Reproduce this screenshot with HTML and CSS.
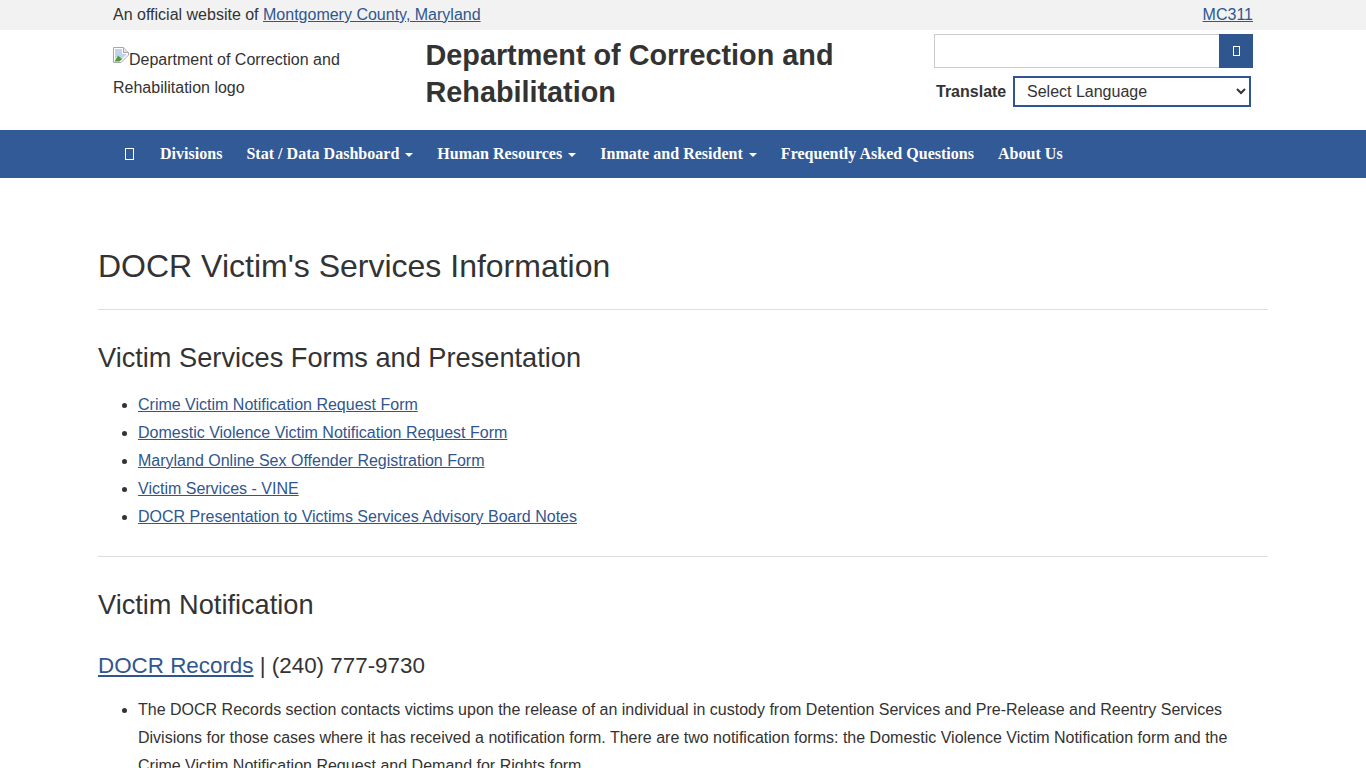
FILE: index.html
```html
<!DOCTYPE html>
<html lang="en">
<head>
<meta charset="utf-8">
<title>DOCR Victim's Services Information</title>
<link rel="stylesheet" href="styles.css">
</head>
<body>
<div class="topbar">
  <div class="wrap topbar-row">
    <div>An official website of <a href="#">Montgomery County, Maryland</a></div>
    <a href="#">MC311</a>
  </div>
</div>
<header class="wrap header">
  <div class="logo">
    <svg class="broken" width="16" height="16" viewBox="0 0 16 16" aria-hidden="true"><path d="M0.5 0.5H10.5L15.5 5.5V8L8 15.5H0.5Z" fill="#fff" stroke="#a8a8a8"/><path d="M10.5 0.5V5.5H15.5" fill="#e4e4e4" stroke="#a8a8a8"/><path d="M2 2H9V7H14L8 13L5 9L2 12Z" fill="#c2d3ee"/><path d="M1.5 14.5L5 8.5L9 12L6.5 14.5Z" fill="#4f9a3f"/></svg>Department of Correction and Rehabilitation logo
  </div>
  <div class="site-title">Department of Correction and Rehabilitation</div>
  <div class="tools">
    <form class="search">
      <input class="search-input" type="text" aria-label="Search">
      <button class="search-btn" type="button" aria-label="Search"><span class="tofu"></span></button>
    </form>
    <div class="translate">
      <label class="translate-label" for="lang">Translate</label>
      <select id="lang" class="lang"><option>Select Language</option></select>
    </div>
  </div>
</header>
<nav class="nav">
  <div class="wrap nav-row">
    <a class="nav-item" href="#"><span class="tofu nav-tofu"></span></a>
    <a class="nav-item" href="#">Divisions</a>
    <a class="nav-item" href="#">Stat / Data Dashboard<span class="caret"></span></a>
    <a class="nav-item" href="#">Human Resources<span class="caret"></span></a>
    <a class="nav-item" href="#">Inmate and Resident<span class="caret"></span></a>
    <a class="nav-item" href="#">Frequently Asked Questions</a>
    <a class="nav-item" href="#">About Us</a>
  </div>
</nav>
<main class="content">
  <h1>DOCR Victim's Services Information</h1>
  <hr class="rule-first">
  <h2>Victim Services Forms and Presentation</h2>
  <ul>
    <li><a href="#">Crime Victim Notification Request Form</a></li>
    <li><a href="#">Domestic Violence Victim Notification Request Form</a></li>
    <li><a href="#">Maryland Online Sex Offender Registration Form</a></li>
    <li><a href="#">Victim Services - VINE</a></li>
    <li><a href="#">DOCR Presentation to Victims Services Advisory Board Notes</a></li>
  </ul>
  <hr class="rule-second">
  <h2>Victim Notification</h2>
  <h3><a href="#">DOCR Records</a> | (240) 777-9730</h3>
  <ul>
    <li>The DOCR Records section contacts victims upon the release of an individual in custody from Detention Services and Pre-Release and Reentry Services Divisions for those cases where it has received a notification form. There are two notification forms: the Domestic Violence Victim Notification form and the Crime Victim Notification Request and Demand for Rights form.</li>
  </ul>
</main>
</body>
</html>
```
FILE: styles.css
```css
* { box-sizing: border-box; }
html, body { margin: 0; padding: 0; }
body {
  font-family: "Liberation Sans", Arial, sans-serif;
  font-size: 16px;
  line-height: 28px;
  color: #333;
  background: #fff;
}
a { color: #30568f; text-decoration: underline; }
.wrap { width: 1140px; margin: 0 auto; }
.topbar { background: #f2f2f2; height: 30px; }
.topbar-row { display: flex; justify-content: space-between; line-height: 30px; }
.header { display: flex; height: 100px; }
.logo { width: 312.5px; padding: 16px 60px 0 0; }
.broken { vertical-align: 0; margin-bottom: 0; transform: translateY(-2px); }
.site-title {
  width: 508.5px;
  padding-top: 7px;
  font-size: 28.8px;
  line-height: 37px;
  font-weight: 700;
}
.tools { width: 319px; padding-top: 4px; }
.search { display: flex; height: 34px; margin: 0; }
.search-input {
  flex: 1;
  height: 34px;
  border: 1px solid #ccc;
  border-right: 0;
  background: #fff;
  padding: 6px 12px;
  min-width: 0;
}
.search-btn {
  width: 34px;
  height: 34px;
  border: 0;
  padding: 0;
  background: #30568f;
  display: flex;
  align-items: center;
  justify-content: center;
}
.tofu { display: block; width: 7px; height: 10px; border: 1px solid #fff; }
.nav-tofu { width: 9px; height: 12px; margin-right: 2px; }
.translate { display: flex; align-items: center; margin-top: 8px; padding-left: 2px; }
.translate-label { font-weight: 700; width: 77px; }
.lang {
  width: 238px;
  height: 31px;
  border: 2px solid #30568f;
  background: #fff;
  color: #333;
  font-family: "Liberation Sans", Arial, sans-serif;
  font-size: 16px;
  padding-left: 8px;
}
.nav { background: #325a96; height: 48px; }
.nav-row { display: flex; align-items: center; height: 48px; }
.nav-item {
  color: #fff;
  text-decoration: none;
  font-family: "Liberation Serif", "Times New Roman", serif;
  font-weight: 700;
  font-size: 16px;
  letter-spacing: 0.02px;
  padding: 0 12px;
  display: flex;
  align-items: center;
  white-space: nowrap;
}
.caret {
  display: inline-block;
  margin-left: 6px;
  margin-top: 2px;
  border-top: 4px solid #fff;
  border-left: 4px solid transparent;
  border-right: 4px solid transparent;
}
.content { width: 1170px; margin: 0 auto; padding-top: 66px; }
h1, h2, h3 { font-weight: 400; color: #333; margin: 0; }
h1 { font-size: 32px; line-height: 44px; }
h2 { font-size: 27.2px; line-height: 36px; }
h3 { font-size: 22.4px; line-height: 32px; margin-top: 27px; }
hr { border: 0; border-top: 1px solid #ddd; margin: 0; }
.rule-first { margin: 21px 0 30px; }
.rule-second { margin: 25px 0 30px; }
ul { margin: 0; padding: 0 0 0 40px; }
h2 + ul { margin-top: 15px; }
h3 + ul { margin-top: 14px; }
```
